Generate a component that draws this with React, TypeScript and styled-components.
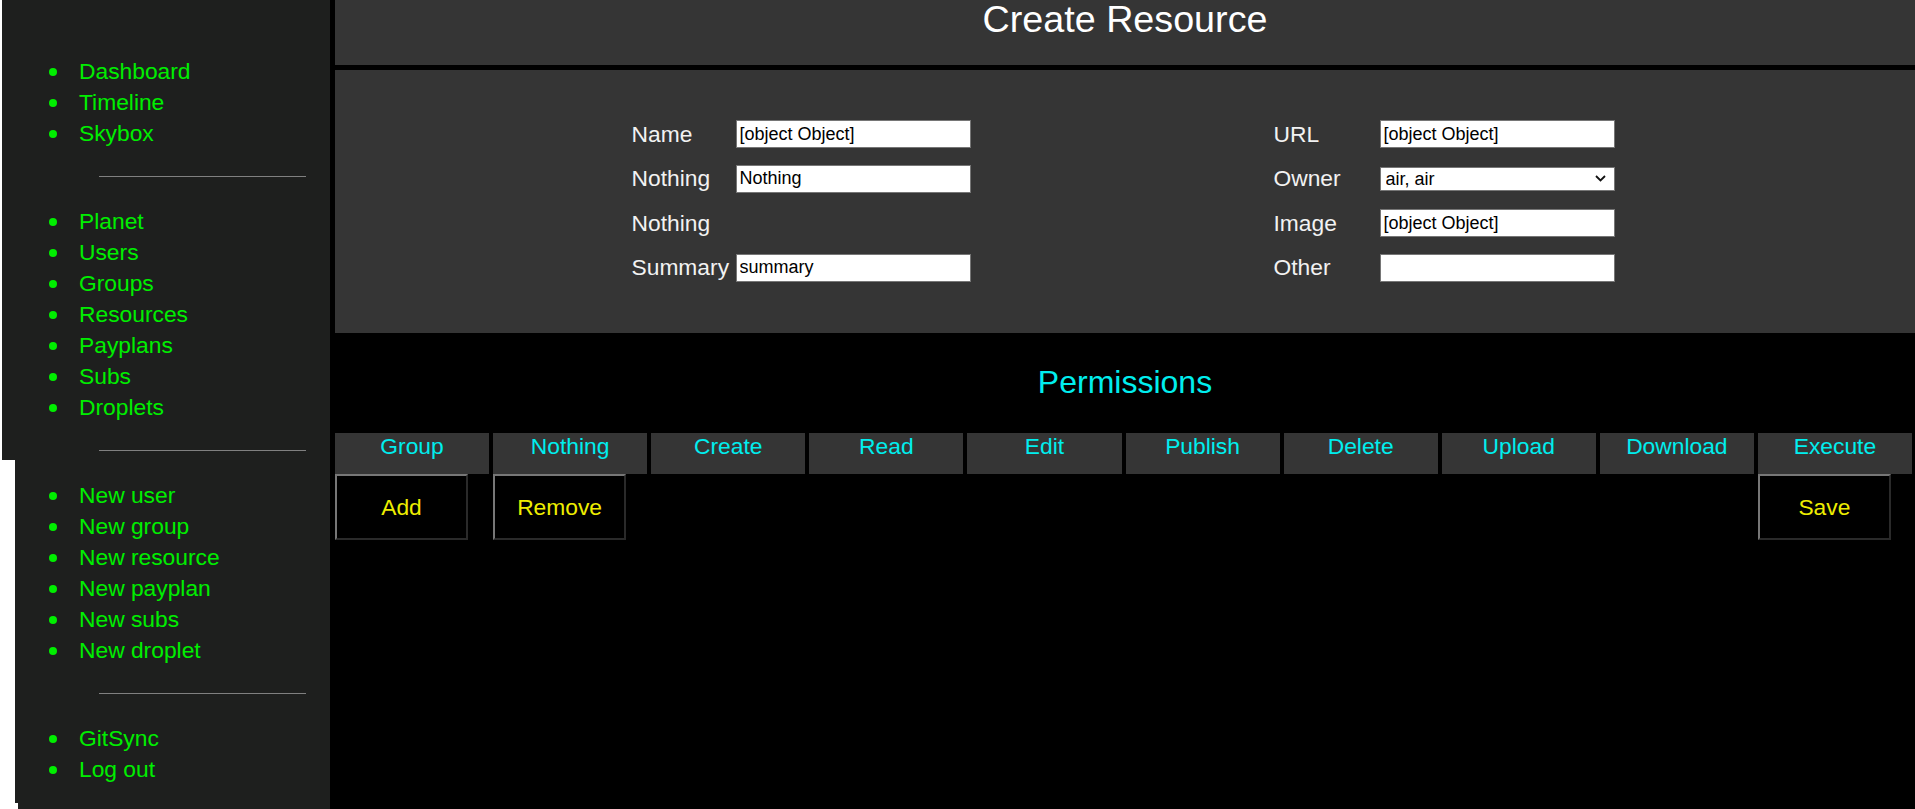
import React from "react";
import styled, { createGlobalStyle } from "styled-components";

const GlobalStyle = createGlobalStyle`
  html, body {
    margin: 0;
    padding: 0;
    background: #ffffff;
    font-family: "Liberation Sans", Arial, sans-serif;
  }
  * { box-sizing: border-box; }
`;

const Page = styled.div`
  display: flex;
  width: 100%;
  height: 100vh;
  overflow: hidden;
`;

const Sidebar = styled.aside`
  flex: 0 0 330px;
  background: #1e1f1e;
  padding-top: 56px;
  clip-path: polygon(2px 0, 100% 0, 100% 100%, 18px 100%, 18px 803px, 15px 803px, 15px 460px, 2px 460px);
`;

const NavList = styled.ul`
  list-style: none;
  margin: 0;
  padding: 0;
`;

const NavItem = styled.li`
  display: flex;
  align-items: center;
  gap: 22px;
  padding-left: 49px;
  height: 31px;
  font-size: 22.8px;
  line-height: 31px;
  color: #00ee00;
`;

const Bullet = styled.span`
  width: 8px;
  height: 8px;
  border-radius: 50%;
  background: #00ee00;
  flex: 0 0 8px;
`;

const Divider = styled.hr`
  margin: 27px 0 29px 99px;
  width: 207px;
  height: 1px;
  border: none;
  background: #808080;
`;

const Main = styled.main`
  flex: 1;
  background: #000;
  padding-left: 5px;
  display: flex;
  flex-direction: column;
`;

const Header = styled.header`
  height: 65px;
  background: #353535;
  display: flex;
  justify-content: center;
  padding-top: 1px;
`;

const Title = styled.h1`
  margin: 0;
  font-size: 37.7px;
  line-height: 37px;
  font-weight: normal;
  color: #ffffff;
`;

const FormPanel = styled.section`
  margin-top: 5px;
  background: #353535;
  height: 263px;
  padding-top: 42px;
  padding-right: 4px;
  display: flex;
  justify-content: center;
  gap: 303px;
`;

const FieldColumn = styled.div<{ $labelWidth: number }>`
  display: grid;
  grid-template-columns: ${(p) => p.$labelWidth}px 235px;
  grid-auto-rows: 44.5px;
  align-items: center;
`;

const Label = styled.label`
  font-size: 22.8px;
  color: #f2f2f2;
  white-space: nowrap;
`;

const TextInput = styled.input`
  width: 235px;
  height: 28px;
  border: 1px solid #767676;
  padding: 0 3px;
  background: #fff;
  color: #000;
  font-family: "Liberation Sans", Arial, sans-serif;
  font-size: 18px;
  outline: none;
`;

const SelectWrap = styled.div`
  position: relative;
  width: 235px;
  height: 24px;
`;

const Select = styled.select`
  appearance: none;
  width: 235px;
  height: 24px;
  border: 1px solid #767676;
  padding: 0 5px;
  background: #fff;
  color: #000;
  font-family: "Liberation Sans", Arial, sans-serif;
  font-size: 18px;
  outline: none;
`;

const Chevron = styled.svg`
  position: absolute;
  right: 9px;
  top: 8px;
  pointer-events: none;
`;

const SectionTitle = styled.h2`
  margin: 31px 0 0;
  text-align: center;
  font-size: 32px;
  line-height: 37px;
  font-weight: normal;
  color: #00eeee;
`;

const PermGrid = styled.div`
  margin-top: 32px;
  margin-right: 3px;
  display: grid;
  grid-template-columns: repeat(10, 1fr);
  column-gap: 4px;
  row-gap: 0;
`;

const HeadCell = styled.div`
  height: 41px;
  background: #353535;
  color: #00eeee;
  font-size: 22.8px;
  text-align: center;
  line-height: 26px;
`;

const Slot = styled.div`
  min-height: 66px;
`;

const ActionButton = styled.button`
  width: 133px;
  height: 66px;
  background: #000;
  color: #eeee00;
  font-family: "Liberation Sans", Arial, sans-serif;
  font-size: 22.8px;
  border-style: solid;
  border-width: 2px;
  border-color: #777777 #2a2a2a #2a2a2a #777777;
  padding: 0;
  cursor: pointer;
`;

const navGroups = [
  ["Dashboard", "Timeline", "Skybox"],
  ["Planet", "Users", "Groups", "Resources", "Payplans", "Subs", "Droplets"],
  ["New user", "New group", "New resource", "New payplan", "New subs", "New droplet"],
  ["GitSync", "Log out"],
];

const permColumns = [
  "Group",
  "Nothing",
  "Create",
  "Read",
  "Edit",
  "Publish",
  "Delete",
  "Upload",
  "Download",
  "Execute",
];

export default function App() {
  return (
    <>
      <GlobalStyle />
      <Page>
        <Sidebar>
          {navGroups.map((group, gi) => (
            <React.Fragment key={gi}>
              <NavList>
                {group.map((item) => (
                  <NavItem key={item}>
                    <Bullet />
                    {item}
                  </NavItem>
                ))}
              </NavList>
              {gi < navGroups.length - 1 && <Divider />}
            </React.Fragment>
          ))}
        </Sidebar>
        <Main>
          <Header>
            <Title>Create Resource</Title>
          </Header>
          <FormPanel>
            <FieldColumn $labelWidth={104}>
              <Label>Name</Label>
              <TextInput defaultValue="[object Object]" />
              <Label>Nothing</Label>
              <TextInput defaultValue="Nothing" />
              <Label>Nothing</Label>
              <span />
              <Label>Summary</Label>
              <TextInput defaultValue="summary" />
            </FieldColumn>
            <FieldColumn $labelWidth={106}>
              <Label>URL</Label>
              <TextInput defaultValue="[object Object]" />
              <Label>Owner</Label>
              <SelectWrap>
                <Select defaultValue="air">
                  <option value="air">air, air</option>
                </Select>
                <Chevron width="11" height="7" viewBox="0 0 11 7">
                  <path d="M1 1 L5.5 5.5 L10 1" fill="none" stroke="#111" strokeWidth="1.8" />
                </Chevron>
              </SelectWrap>
              <Label>Image</Label>
              <TextInput defaultValue="[object Object]" />
              <Label>Other</Label>
              <TextInput defaultValue="" />
            </FieldColumn>
          </FormPanel>
          <SectionTitle>Permissions</SectionTitle>
          <PermGrid>
            {permColumns.map((c) => (
              <HeadCell key={c}>{c}</HeadCell>
            ))}
            <Slot>
              <ActionButton>Add</ActionButton>
            </Slot>
            <Slot>
              <ActionButton>Remove</ActionButton>
            </Slot>
            <Slot />
            <Slot />
            <Slot />
            <Slot />
            <Slot />
            <Slot />
            <Slot />
            <Slot>
              <ActionButton>Save</ActionButton>
            </Slot>
          </PermGrid>
        </Main>
      </Page>
    </>
  );
}
